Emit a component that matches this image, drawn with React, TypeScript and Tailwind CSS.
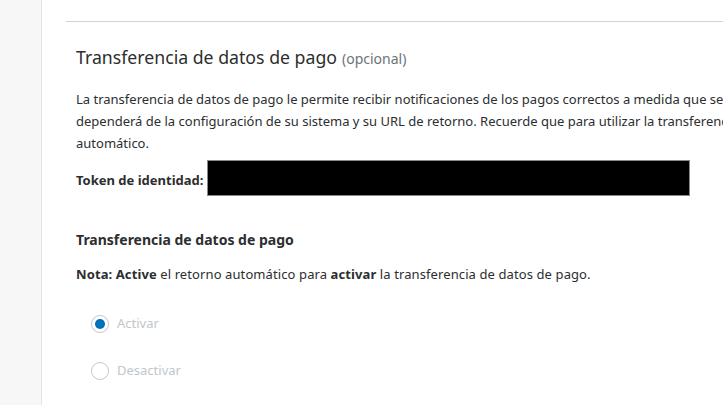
import React from "react";

const font = { fontFamily: "'Noto Sans', 'Open Sans', sans-serif" };

function Radio({ checked, label }: { checked: boolean; label: string }) {
  return (
    <div className="flex items-center h-[24px]">
      <span className="w-[18px] h-[18px] rounded-full border border-[#c3c8cb] bg-white flex items-center justify-center shrink-0">
        {checked && <span className="w-[10px] h-[10px] rounded-full bg-[#0070ba]" />}
      </span>
      <span className="ml-[8px] text-[13px] text-[#c1c7cb]">{label}</span>
    </div>
  );
}

export default function App() {
  return (
    <div className="w-[723px] h-[405px] overflow-hidden flex bg-white" style={font}>
      <div className="w-[42px] shrink-0 bg-[#f7f7f7] border-r border-[#e4e4e4]" />
      <div className="flex-1 min-w-0 pl-[24px] pt-[21px] overflow-hidden">
        <div className="border-t border-[#cdd3d6]">
          <div className="pl-[10px] whitespace-nowrap text-[#2c2e2f] overflow-hidden">
            <div className="mt-[23px] h-[24px] flex items-baseline">
              <span className="text-[17.7px] leading-[24px]">Transferencia de datos de pago</span>
              <span className="ml-[5px] text-[14px] text-[#6c7378]">(opcional)</span>
            </div>
            <div className="mt-[19px] text-[13px] leading-[22px]">
              <div>La transferencia de datos de pago le permite recibir notificaciones de los pagos correctos a medida que se</div>
              <div>dependerá de la configuración de su sistema y su URL de retorno. Recuerde que para utilizar la transferencia</div>
              <div>automático.</div>
            </div>
            <div className="mt-[6px] flex items-center">
              <span className="text-[13px] font-bold mt-[5px]">Token de identidad:</span>
              <div className="ml-[4px] w-[483px] h-[36px] bg-black border border-[#8a8a8a] shrink-0" />
            </div>
            <div className="mt-[34px] text-[14px] font-bold leading-[20px]">Transferencia de datos de pago</div>
            <div className="mt-[14px] text-[13px] leading-[20px] tracking-[0.1px]">
              <b>Nota: Active</b> el retorno automático para <b>activar</b> la transferencia de datos de pago.
            </div>
            <div className="mt-[28px] pl-[15px] flex flex-col gap-[23px]">
              <Radio checked label="Activar" />
              <Radio checked={false} label="Desactivar" />
            </div>
          </div>
        </div>
      </div>
    </div>
  );
}
